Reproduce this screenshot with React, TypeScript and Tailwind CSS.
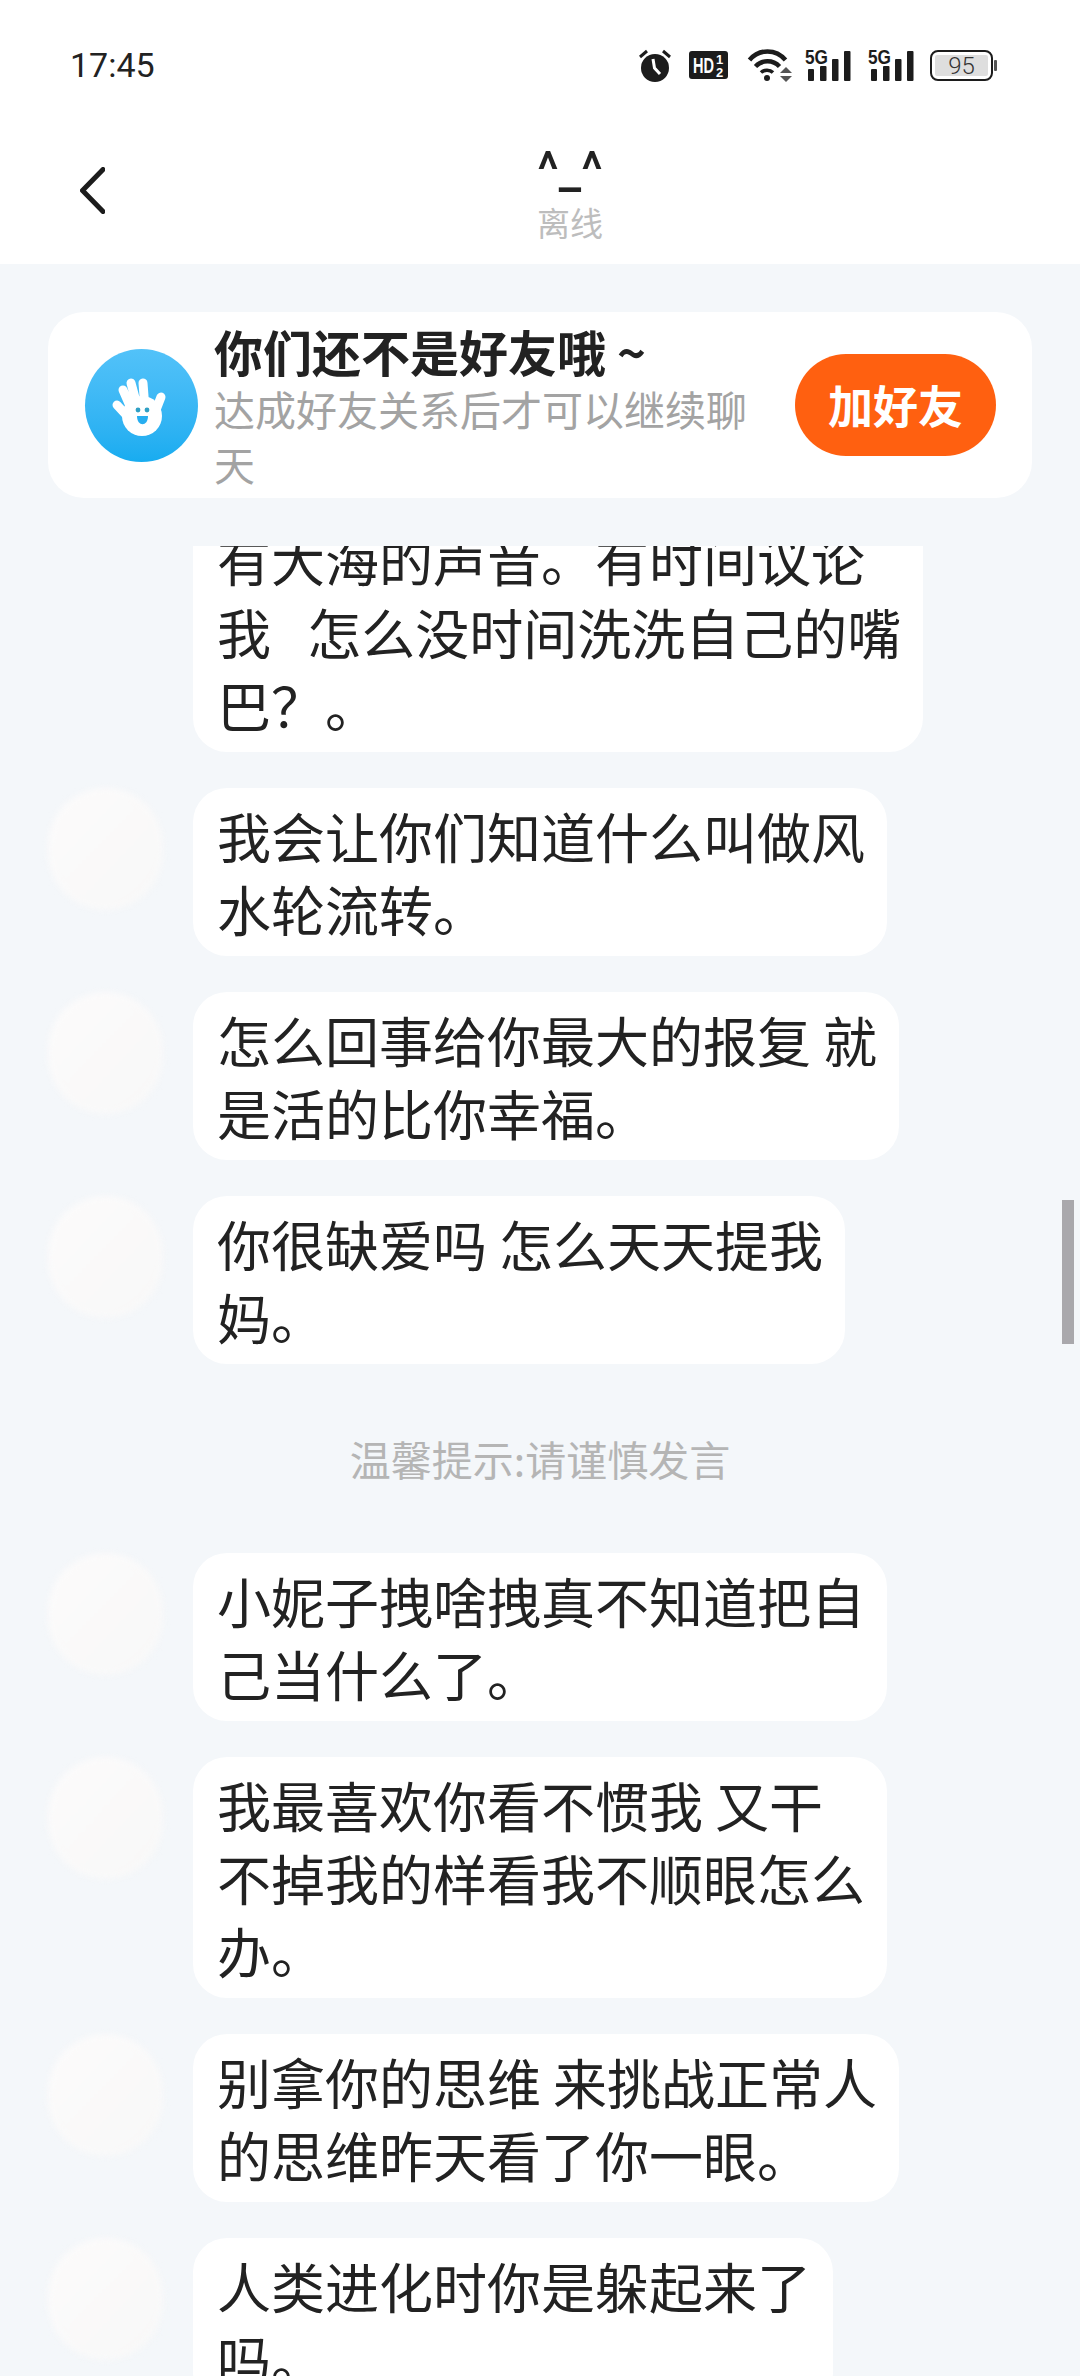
function AlarmIcon() {
  return (
    <svg width="32" height="34" viewBox="0 0 32 34">
      <circle cx="16" cy="20" r="14" fill="#1c1c1c" />
      <path d="M1 9 L8 3 M24 3 L31 9" stroke="#1c1c1c" strokeWidth="3" />
      <path d="M14 11 L15.5 20 L21 26" stroke="#fff" strokeWidth="3" fill="none" />
    </svg>
  );
}

function HdIcon() {
  return (
    <svg width="39" height="28" viewBox="0 0 39 28" fontFamily="Liberation Sans, sans-serif" fontWeight="700">
      <rect width="39" height="28" rx="3" fill="#1c1c1c" />
      <text x="4" y="22" fontSize="22" fill="#fff" textLength="21" lengthAdjust="spacingAndGlyphs">HD</text>
      <text x="27" y="13" fontSize="13" fill="#fff">1</text>
      <text x="27" y="26" fontSize="13" fill="#fff">2</text>
    </svg>
  );
}

function WifiIcon() {
  return (
    <svg width="45" height="34" viewBox="0 0 45 34" fill="none">
      <path d="M2.5 12 C12 0.5 29 0.5 38.5 12" stroke="#1c1c1c" strokeWidth="4.5" />
      <path d="M8.5 18.5 C15 11.5 26 11.5 32.5 18.5" stroke="#1c1c1c" strokeWidth="4.5" />
      <path d="M14 24.5 C17 21.5 23 21.5 26 24.5" stroke="#1c1c1c" strokeWidth="3.5" />
      <circle cx="20" cy="30" r="3" fill="#1c1c1c" />
      <path d="M33 25 L39 19 L45 25 Z" fill="#555" />
      <path d="M33 28 L45 28 L39 34 Z" fill="#555" />
    </svg>
  );
}

function SignalIcon() {
  return (
    <svg width="46" height="32" viewBox="0 0 46 32">
      <text x="0" y="15" fontSize="21" fontWeight="700" fontFamily="Liberation Sans, sans-serif" fill="#1c1c1c" textLength="23" lengthAdjust="spacingAndGlyphs">5G</text>
      <rect x="3" y="20" width="6" height="12" rx="1" fill="#1c1c1c" />
      <rect x="15" y="17" width="6.5" height="15" rx="1" fill="#1c1c1c" />
      <rect x="27" y="10" width="6.5" height="22" rx="1" fill="#1c1c1c" />
      <rect x="39" y="2" width="6.5" height="30" rx="1" fill="#1c1c1c" />
    </svg>
  );
}

function BatteryIcon() {
  return (
    <svg width="67" height="31" viewBox="0 0 67 31">
      <rect x="1" y="1" width="61" height="29" rx="7" fill="#fff" stroke="#1c1c1c" strokeWidth="2" />
      <rect x="5" y="5" width="53" height="21" rx="2" fill="#dedede" />
      <text x="31.5" y="24" textAnchor="middle" fontSize="24" fontFamily="Roboto, sans-serif" fontWeight="300" fill="#333">95</text>
      <rect x="64" y="10" width="3" height="11" rx="1" fill="#555" />
    </svg>
  );
}

function HandIcon() {
  return (
    <svg width="70" height="80" viewBox="7 0 70 80" fill="none">
      <path
        d="M17 40 L30 54 M23 25 L33 48 M31 18 L38 44 M43 18 L45 44 M61 32 L54 50"
        stroke="#fff"
        strokeWidth="9"
        strokeLinecap="round"
      />
      <ellipse cx="42" cy="51" rx="20" ry="20" fill="#fff" />
      <circle cx="38" cy="45" r="2.4" fill="#2f9fc4" />
      <circle cx="47" cy="45" r="2.4" fill="#2f9fc4" />
      <path d="M37 51 H48 C48 62 37 62 37 51 Z" fill="#27aef0" />
    </svg>
  );
}

function Bubble({ lines }: { lines: string[] }) {
  return (
    <div className="rounded-[34px] bg-white py-[11px] pl-[24px] pr-[22px] text-[54px] leading-[73px] whitespace-pre text-[#222222]">
      {lines.map((line) => (
        <div key={line}>{line}</div>
      ))}
    </div>
  );
}

function MessageRow({ lines }: { lines: string[] }) {
  return (
    <div className="flex items-start gap-[30px] pl-[48px]">
      <div className="h-[122px] w-[115px] shrink-0 rounded-full bg-gradient-to-br from-[#fcfbfb] to-[#f8f8f8] blur-[3px]" />
      <Bubble lines={lines} />
    </div>
  );
}

export default function App() {
  return (
    <div className="flex h-[2376px] w-[1080px] flex-col overflow-hidden bg-[#f4f7fa] font-['Noto_Sans_CJK_SC','Noto_Sans',sans-serif]">
      {/* Status bar */}
      <div className="flex h-[130px] shrink-0 items-center justify-between bg-white pl-[70px] pr-[83px]">
        <span className="font-['Roboto',sans-serif] text-[34px] text-[#222222]">17:45</span>
        <div className="flex items-center">
          <AlarmIcon />
          <div className="ml-[18px]"><HdIcon /></div>
          <div className="ml-[19px]"><WifiIcon /></div>
          <div className="ml-[13px]"><SignalIcon /></div>
          <div className="ml-[17px]"><SignalIcon /></div>
          <div className="ml-[16px]"><BatteryIcon /></div>
        </div>
      </div>

      {/* Nav */}
      <div className="flex h-[134px] shrink-0 items-center bg-white pl-[80px]">
        <svg width="25" height="47" viewBox="0 0 25 47" fill="none" className="-mt-[14px]">
          <path d="M23 2.5 L2.5 23.5 L23 44.5" stroke="#1c1c1c" strokeWidth="5" strokeLinecap="round" strokeLinejoin="round" />
        </svg>
        <div className="ml-[432px] -mt-[8px] flex flex-col items-center">
          <span className="font-['Roboto',sans-serif] text-[50px] font-medium leading-[58px] text-[#222222]">^_^</span>
          <span className="text-[33px] leading-[46px] text-[#bdbdbd]">离线</span>
        </div>
      </div>

      {/* Friend prompt */}
      <div className="shrink-0 px-[48px] pt-[48px]">
        <div className="flex h-[186px] items-center rounded-[36px] bg-white pl-[37px] pr-[36px]">
          <div className="flex h-[113px] w-[113px] shrink-0 items-center justify-center rounded-full bg-gradient-to-b from-[#52c2f9] to-[#17acf0]">
            <HandIcon />
          </div>
          <div className="ml-[16px] w-[556px] shrink-0 self-start pt-[9px]">
            <div className="text-[49px] font-bold leading-[60px] text-[#222222]">你们还不是好友哦 ~</div>
            <div className="text-[41px] leading-[55px] text-[#a3a3a3]">达成好友关系后才可以继续聊天</div>
          </div>
          <button className="ml-auto h-[102px] w-[201px] rounded-full bg-[#ff6010] text-[45px] font-bold text-white">
            加好友
          </button>
        </div>
      </div>

      {/* Messages */}
      <div className="relative mt-[48px] min-h-0 flex-1 overflow-hidden">
        <div className="-mt-[35px] flex flex-col gap-[36px]">
          <div className="pl-[193px]">
            <div className="w-fit">
              <Bubble lines={["有大海的声音。有时间议论", "我   怎么没时间洗洗自己的嘴", "巴？。"]} />
            </div>
          </div>
          <MessageRow lines={["我会让你们知道什么叫做风", "水轮流转。"]} />
          <MessageRow lines={["怎么回事给你最大的报复 就", "是活的比你幸福。"]} />
          <MessageRow lines={["你很缺爱吗 怎么天天提我", "妈。"]} />
          <div className="flex h-[117px] items-center justify-center text-[41px] text-[#b5b5b5]">
            温馨提示:请谨慎发言
          </div>
          <MessageRow lines={["小妮子拽啥拽真不知道把自", "己当什么了。"]} />
          <MessageRow lines={["我最喜欢你看不惯我 又干", "不掉我的样看我不顺眼怎么", "办。"]} />
          <MessageRow lines={["别拿你的思维 来挑战正常人", "的思维昨天看了你一眼。"]} />
          <MessageRow lines={["人类进化时你是躲起来了", "吗。"]} />
        </div>
        <div className="absolute right-[6px] top-[654px] h-[144px] w-[12px] bg-[#a9a8ac]" />
      </div>
    </div>
  );
}
